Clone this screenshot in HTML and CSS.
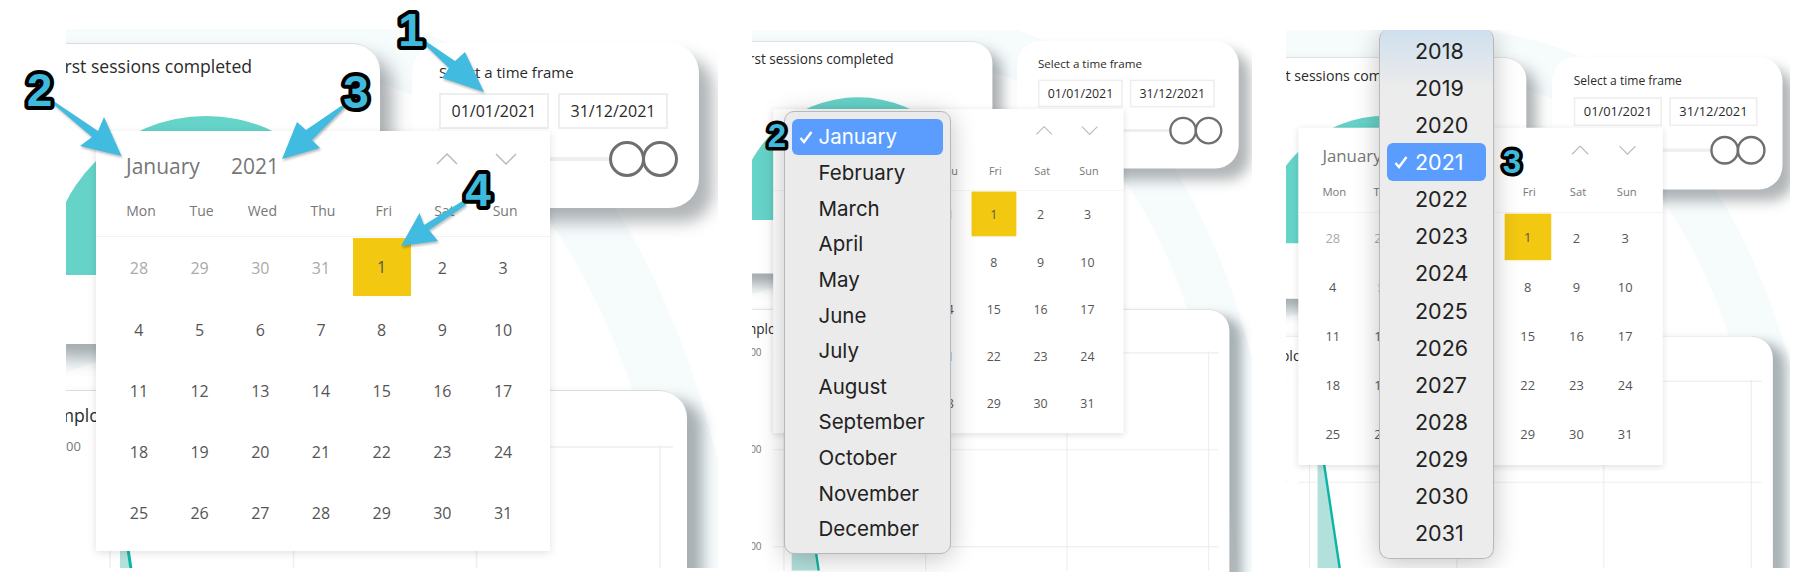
FILE: index.html
```html
<!DOCTYPE html>
<html lang="en">
<head>
    <meta charset="UTF-8">
    <title>Date slicer calendar</title>
    <link rel="stylesheet" href="styles.css">
</head>
<body>
    <div class="shots">

        <!-- First shot: numbered callouts -->
        <div class="shot shot-1">
            <div class="frame">
                <div class="scene">
                    <svg class="arcs" viewBox="0 0 700 700"><path d="M-60 20 C180 -10 350 0 440 90 C560 210 640 400 660 700" /><path d="M-60 330 C60 290 200 240 300 270 C420 300 510 420 550 700" /></svg>
                    <div class="card sessions">
                        <div class="card-title">First sessions completed</div>
                        <div class="gauge"></div>
                    </div>
                    <div class="card timeframe">
                        <div class="tf-label">Select a time frame</div>
                        <div class="tf-inputs"><div class="tf-input">01/01/2021</div><div class="tf-input">31/12/2021</div></div>
                        <div class="tf-slider"><div class="tf-track"></div><div class="tf-knob"></div><div class="tf-knob"></div></div>
                    </div>
                    <div class="card chart">
                        <div class="card-title">Employees</div>
                    </div>
                    <svg class="plot" viewBox="0 0 700 700">
                        <path class="grid-line" d="M30 418H607M30 543.5H607M30 669H607M44 416V720M227.5 416V720M410.5 416V720M594 416V720" />
                        <polygon class="area" points="54,440 50,440 92,720 54,720" />
                        <line class="area-line" x1="50" y1="440" x2="92" y2="720" />
                        <text class="tick" x="15" y="422">300</text>
                        <text class="tick" x="15" y="547.5">200</text>
                        <text class="tick" x="15" y="673">100</text>
                    </svg>
                    <div class="calendar">
                        <div class="cal-head">
                            <span class="cal-month">January</span><span class="cal-year">2021</span>
                            <div class="cal-nav">
                                <svg viewBox="0 0 22 12"><polyline points="1,11 11,1 21,11" /></svg>
                                <svg viewBox="0 0 22 12"><polyline points="1,1 11,11 21,1" /></svg>
                            </div>
                        </div>
                        <div class="cal-weekdays"><span>Mon</span><span>Tue</span><span>Wed</span><span>Thu</span><span>Fri</span><span>Sat</span><span>Sun</span></div>
                        <div class="cal-days">
                            <span class="muted">28</span><span class="muted">29</span><span class="muted">30</span><span class="muted">31</span><span class="selected">1</span><span>2</span><span>3</span>
                            <span>4</span><span>5</span><span>6</span><span>7</span><span>8</span><span>9</span><span>10</span>
                            <span>11</span><span>12</span><span>13</span><span>14</span><span>15</span><span>16</span><span>17</span>
                            <span>18</span><span>19</span><span>20</span><span>21</span><span>22</span><span>23</span><span>24</span>
                            <span>25</span><span>26</span><span>27</span><span>28</span><span>29</span><span>30</span><span>31</span>
                        </div>
                    </div>
                </div>
            </div>
            <svg class="callouts" viewBox="0 0 780 600">
                <polygon class="arrow" points="421,38 455,61 465,52 484,92 442,78 449,68 421,41" />
                <polygon class="arrow" points="52,100 98,131 104,117 121.5,156 80,146 92,137 52,103" />
                <polygon class="arrow" points="344,104 306,130 297,122 282,159 320,148 312,140 345,107" />
                <polygon class="arrow" points="464,200 424,225 419.5,213 401,246 438,241 429,230 466,205" />
                <text class="badge" x="411" y="46">1</text>
                <text class="badge" x="39.5" y="106">2</text>
                <text class="badge" x="356" y="108">3</text>
                <text class="badge" x="478" y="206">4</text>
            </svg>
        </div>

        <!-- Second shot: month menu open -->
        <div class="shot shot-2">
            <div class="frame">
                <div class="scene">
                    <svg class="arcs" viewBox="0 0 700 700"><path d="M-60 20 C180 -10 350 0 440 90 C560 210 640 400 660 700" /><path d="M-60 330 C60 290 200 240 300 270 C420 300 510 420 550 700" /></svg>
                    <div class="card sessions">
                        <div class="card-title">First sessions completed</div>
                        <div class="gauge"></div>
                    </div>
                    <div class="card timeframe">
                        <div class="tf-label">Select a time frame</div>
                        <div class="tf-inputs"><div class="tf-input">01/01/2021</div><div class="tf-input">31/12/2021</div></div>
                        <div class="tf-slider"><div class="tf-track"></div><div class="tf-knob"></div><div class="tf-knob"></div></div>
                    </div>
                    <div class="card chart">
                        <div class="card-title">Employees</div>
                    </div>
                    <svg class="plot" viewBox="0 0 700 700">
                        <path class="grid-line" d="M30 418H607M30 543.5H607M30 669H607M44 416V720M227.5 416V720M410.5 416V720M594 416V720" />
                        <polygon class="area" points="54,440 50,440 92,720 54,720" />
                        <line class="area-line" x1="50" y1="440" x2="92" y2="720" />
                        <text class="tick" x="15" y="422">300</text>
                        <text class="tick" x="15" y="547.5">200</text>
                        <text class="tick" x="15" y="673">100</text>
                    </svg>
                    <div class="calendar">
                        <div class="cal-head">
                            <span class="cal-month">January</span><span class="cal-year">2021</span>
                            <div class="cal-nav">
                                <svg viewBox="0 0 22 12"><polyline points="1,11 11,1 21,11" /></svg>
                                <svg viewBox="0 0 22 12"><polyline points="1,1 11,11 21,1" /></svg>
                            </div>
                        </div>
                        <div class="cal-weekdays"><span>Mon</span><span>Tue</span><span>Wed</span><span>Thu</span><span>Fri</span><span>Sat</span><span>Sun</span></div>
                        <div class="cal-days">
                            <span class="muted">28</span><span class="muted">29</span><span class="muted">30</span><span class="muted">31</span><span class="selected">1</span><span>2</span><span>3</span>
                            <span>4</span><span>5</span><span>6</span><span>7</span><span>8</span><span>9</span><span>10</span>
                            <span>11</span><span>12</span><span>13</span><span>14</span><span>15</span><span>16</span><span>17</span>
                            <span>18</span><span>19</span><span>20</span><span>21</span><span>22</span><span>23</span><span>24</span>
                            <span>25</span><span>26</span><span>27</span><span>28</span><span>29</span><span>30</span><span>31</span>
                        </div>
                    </div>
                </div>
                <ul class="menu month-menu">
                    <li class="current"><svg viewBox="0 0 14 14"><polyline points="1.5,8 5,12 12.5,2" /></svg>January</li>
                    <li>February</li>
                    <li>March</li>
                    <li>April</li>
                    <li>May</li>
                    <li>June</li>
                    <li>July</li>
                    <li>August</li>
                    <li>September</li>
                    <li>October</li>
                    <li>November</li>
                    <li>December</li>
                </ul>
            </div>
            <svg class="callouts" viewBox="0 0 500 542">
                <text class="badge small" x="25" y="117">2</text>
            </svg>
        </div>

        <!-- Third shot: year menu open -->
        <div class="shot shot-3">
            <div class="frame">
                <div class="scene">
                    <svg class="arcs" viewBox="0 0 700 700"><path d="M-60 20 C180 -10 350 0 440 90 C560 210 640 400 660 700" /><path d="M-60 330 C60 290 200 240 300 270 C420 300 510 420 550 700" /></svg>
                    <div class="card sessions">
                        <div class="card-title">First sessions completed</div>
                        <div class="gauge"></div>
                    </div>
                    <div class="card timeframe">
                        <div class="tf-label">Select a time frame</div>
                        <div class="tf-inputs"><div class="tf-input">01/01/2021</div><div class="tf-input">31/12/2021</div></div>
                        <div class="tf-slider"><div class="tf-track"></div><div class="tf-knob"></div><div class="tf-knob"></div></div>
                    </div>
                    <div class="card chart">
                        <div class="card-title">Employees</div>
                    </div>
                    <svg class="plot" viewBox="0 0 700 700">
                        <path class="grid-line" d="M30 418H607M30 543.5H607M30 669H607M44 416V720M227.5 416V720M410.5 416V720M594 416V720" />
                        <polygon class="area" points="54,440 50,440 92,720 54,720" />
                        <line class="area-line" x1="50" y1="440" x2="92" y2="720" />
                        <text class="tick" x="15" y="422">300</text>
                        <text class="tick" x="15" y="547.5">200</text>
                        <text class="tick" x="15" y="673">100</text>
                    </svg>
                    <div class="calendar">
                        <div class="cal-head">
                            <span class="cal-month">January</span><span class="cal-year">2021</span>
                            <div class="cal-nav">
                                <svg viewBox="0 0 22 12"><polyline points="1,11 11,1 21,11" /></svg>
                                <svg viewBox="0 0 22 12"><polyline points="1,1 11,11 21,1" /></svg>
                            </div>
                        </div>
                        <div class="cal-weekdays"><span>Mon</span><span>Tue</span><span>Wed</span><span>Thu</span><span>Fri</span><span>Sat</span><span>Sun</span></div>
                        <div class="cal-days">
                            <span class="muted">28</span><span class="muted">29</span><span class="muted">30</span><span class="muted">31</span><span class="selected">1</span><span>2</span><span>3</span>
                            <span>4</span><span>5</span><span>6</span><span>7</span><span>8</span><span>9</span><span>10</span>
                            <span>11</span><span>12</span><span>13</span><span>14</span><span>15</span><span>16</span><span>17</span>
                            <span>18</span><span>19</span><span>20</span><span>21</span><span>22</span><span>23</span><span>24</span>
                            <span>25</span><span>26</span><span>27</span><span>28</span><span>29</span><span>30</span><span>31</span>
                        </div>
                    </div>
                </div>
                <ul class="menu year-menu">
                    <li>2018</li>
                    <li>2019</li>
                    <li>2020</li>
                    <li class="current"><svg viewBox="0 0 14 14"><polyline points="1.5,8 5,12 12.5,2" /></svg>2021</li>
                    <li>2022</li>
                    <li>2023</li>
                    <li>2024</li>
                    <li>2025</li>
                    <li>2026</li>
                    <li>2027</li>
                    <li>2028</li>
                    <li>2029</li>
                    <li>2030</li>
                    <li>2031</li>
                </ul>
            </div>
            <svg class="callouts" viewBox="0 0 504 538">
                <text class="badge small" x="226" y="143">3</text>
            </svg>
        </div>

    </div>
</body>
</html>
```
FILE: styles.css
```css
body {
    margin: 0;
    background: #fff;
    font-family: "Open Sans", Arial, sans-serif;
}

/* Three shots side by side */
.shots {
    display: flex;
    align-items: flex-start;
    gap: 34px;
    padding: 29px 0 0 66px;
}

.shot {
    position: relative;
    flex: none;
}

.frame {
    position: relative;
    height: 100%;
    overflow: hidden;
    background: #fff;
}

.shot-1 { width: 652px; height: 539px; }
.shot-2 { width: 500px; height: 542px; margin-top: 1px; }
.shot-3 { width: 504px; height: 538px; margin-top: 1px; }

/* The report behind, drawn at the size of the first shot */
.scene {
    position: absolute;
    left: 0;
    top: 0;
    width: 652px;
    height: 700px;
    transform-origin: 0 0;
}

.shot-2 .scene { transform: translate(-2px, 0.2px) scale(0.772); }
.shot-3 .scene { transform: translate(-11.8px, 15.8px) scale(0.803); }

.arcs, .plot {
    position: absolute;
    left: 0;
    top: 0;
    width: 700px;
    height: 700px;
}

.arcs { overflow: visible; }

.arcs path {
    fill: none;
    stroke: #f6fbfc;
    stroke-width: 62;
}

/* Cards */
.card {
    position: absolute;
    background: #fff;
    box-sizing: border-box;
}

.card-title {
    font-size: 17.6px;
    color: #2a2a2a;
}

.sessions {
    left: -40px;
    top: 14px;
    width: 354px;
    height: 301px;
    padding: 10px 0 0 25px;
    border-radius: 28px;
    border-top: 1px solid #d8dcde;
    box-shadow: 12px 14px 18px rgba(60, 70, 75, 0.45);
}

.gauge {
    position: absolute;
    left: 23px;
    top: 72px;
    width: 314px;
    height: 159px;
    border-radius: 157px 157px 0 0;
    background: #66d3c8;
}

.timeframe {
    left: 346px;
    top: 14px;
    width: 287px;
    height: 165px;
    padding: 18px 21px 0 27px;
    border-radius: 30px;
    box-shadow: 14px 14px 16px rgba(60, 70, 75, 0.4);
}

.tf-label {
    font-size: 15px;
    line-height: 22px;
    color: #2a2a2a;
}

.tf-inputs {
    display: flex;
    gap: 9px;
    margin-top: 10px;
}

.tf-input {
    width: 110px;
    height: 36px;
    box-sizing: border-box;
    border: 2px solid #eee;
    font-size: 16px;
    line-height: 32px;
    text-align: center;
    color: #2a2a2a;
}

.tf-slider {
    display: flex;
    align-items: center;
    margin-top: 12px;
}

.tf-track {
    flex: 1;
    height: 4px;
    background: #eee;
}

.tf-knob {
    width: 36px;
    height: 36px;
    box-sizing: border-box;
    border: 3px solid #6f6f6f;
    border-radius: 50%;
    background: transparent;
}

.tf-knob + .tf-knob {
    margin-left: -3px;
}

.chart {
    left: -40px;
    top: 361px;
    width: 661px;
    height: 400px;
    padding: 12px 0 0 22px;
    border-radius: 28px;
    border-top: 1px solid #dcdcdc;
    box-shadow: 16px 10px 14px rgba(60, 75, 80, 0.42);
}

/* Chart lines */
.grid-line {
    fill: none;
    stroke: #eee;
    stroke-width: 1.5;
}

.area {
    fill: #b2e0da;
}

.area-line {
    stroke: #0bb5a6;
    stroke-width: 3;
}

.tick {
    font-size: 13px;
    fill: #777;
    text-anchor: end;
}

/* Calendar popup */
.calendar {
    position: absolute;
    left: 30px;
    top: 101.7px;
    width: 453.6px;
    height: 420.3px;
    background: #fff;
    box-shadow: 0 2px 8px rgba(0, 0, 0, 0.12);
}

.cal-head {
    display: flex;
    align-items: flex-start;
    height: 45px;
    padding: 21px 33px 0 30px;
    font-size: 21px;
    line-height: 28px;
    color: #777;
}

.cal-month {
    width: 105px;
}

.cal-nav {
    display: flex;
    gap: 37px;
    margin: 1px 0 0 auto;
}

.cal-nav svg {
    width: 22px;
    height: 12px;
}

.cal-nav polyline {
    fill: none;
    stroke: #bbb;
    stroke-width: 1.5;
}

.cal-weekdays, .cal-days {
    display: grid;
    grid-template-columns: repeat(7, 60.7px);
    padding: 0 12.6px;
    text-align: center;
}

.cal-weekdays {
    padding-left: 14.6px;
    padding-bottom: 11px;
    border-bottom: 1.5px solid #f2f2f2;
    font-size: 14px;
    line-height: 28px;
    color: #777;
}

.cal-days {
    grid-auto-rows: 61.25px;
    padding-top: 1px;
    font-size: 16px;
    color: #555;
}

.cal-days span {
    display: flex;
    align-items: center;
    justify-content: center;
}

.cal-days .muted {
    color: #aaa;
}

.cal-days .selected {
    margin: 0 1.5px 3px;
    background: #f2c811;
}

/* Native menus laid over the calendar */
.menu {
    position: absolute;
    box-sizing: border-box;
    margin: 0;
    padding: 0 7px 7px;
    list-style: none;
    background: #ebebeb;
    border: 1px solid #b8b8b8;
    border-radius: 10px;
    box-shadow: 0 4px 26px rgba(0, 0, 0, 0.24);
    font-family: Inter, Arial, sans-serif;
    font-size: 20.5px;
    color: #222;
}

.menu li {
    position: relative;
    display: flex;
    align-items: center;
    border-radius: 6px;
}

.menu svg {
    position: absolute;
    left: 7px;
    width: 14px;
    height: 14px;
}

.menu polyline {
    fill: none;
    stroke: #fff;
    stroke-width: 2.4;
}

.menu .current {
    background: #5a9dff;
    color: #fff;
}

.month-menu {
    left: 32px;
    top: 81px;
    width: 167px;
    height: 443px;
    padding-top: 7px;
}

.month-menu li {
    height: 35.65px;
    padding-left: 26.5px;
}

.year-menu {
    left: 93px;
    top: -1px;
    width: 115px;
    height: 530px;
    padding-top: 3px;
    background: linear-gradient(#cfdfee, #ececec 60px);
    border-top: none;
    font-size: 21.5px;
}

.year-menu li {
    height: 37.15px;
    padding-left: 28px;
}

/* Numbered callouts */
.callouts {
    position: absolute;
    overflow: visible;
    pointer-events: none;
}

.shot-1 .callouts { left: -66px; top: -29px; width: 780px; height: 600px; }
.shot-2 .callouts { left: 0; top: 0; width: 500px; height: 542px; }
.shot-3 .callouts { left: 0; top: 0; width: 504px; height: 538px; }

.arrow {
    fill: #41bce0;
    filter: drop-shadow(1px 2px 1px rgba(0, 0, 0, 0.25));
}

.badge {
    font-family: "Liberation Sans", Arial, sans-serif;
    font-weight: bold;
    font-size: 46px;
    text-anchor: middle;
    fill: #3fb9dc;
    stroke: #000;
    stroke-width: 8px;
    stroke-linejoin: round;
    paint-order: stroke fill;
}

.badge.small {
    font-size: 33px;
    stroke-width: 7px;
}
```
